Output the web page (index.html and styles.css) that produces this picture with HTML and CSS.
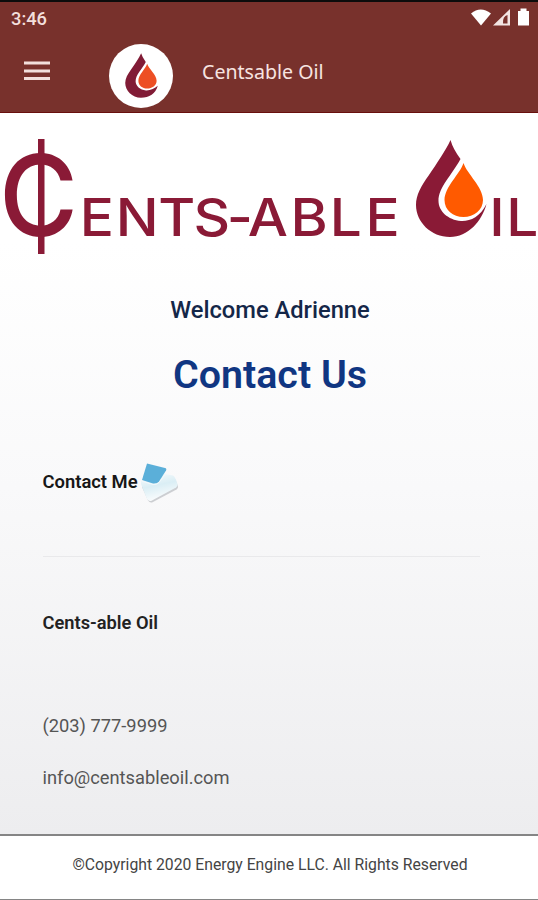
FILE: index.html
```html
<!DOCTYPE html>
<html lang="en">
<head>
<meta charset="utf-8">
<title>Centsable Oil</title>
<link rel="stylesheet" href="styles.css">
</head>
<body>
<div class="app">
  <header class="header">
    <div class="status">
      <span class="time">3:46</span>
      <svg class="status-icons" width="60" height="20" viewBox="0 0 60 20" fill="#fff">
        <path d="M1 5.500Q10.500-2.500 21 5.500L11 17.500Z"/>
        <path d="M23 17.500L40 1V17.500ZM33 15.500H37.500V7Q32.500 8 33 15.500Z" fill-rule="evenodd" fill="#f2e4e2"/>
        <path d="M48 3H50.500V.5H56.500V3H59V17.500H48Z"/>
      </svg>
    </div>
    <div class="toolbar">
      <svg class="menu" width="26" height="20" viewBox="0 0 26 20" fill="#f3dfdc"><path d="M0 .5h26v3H0zM0 8.500h26v3H0zM0 16h26v3H0z"/></svg>
      <div class="avatar">
        <svg width="33" height="45" viewBox="415.500 26.500 71.500 98" preserveAspectRatio="none">
          <path fill="#811c36" d="M450.500 27C446 37 437 50 429 62C421 73 416 82 416 92C416 109 431 124 450 124C468 124 482 115 486.500 98C480 104 470 108.500 461 108C448 107 438.500 98 438.500 88C438.500 74 452 62 460.500 46Q453 36 450.500 27Z"/>
          <path fill="#ed4f24" d="M463.500 50C460 61 444.500 74 444.500 87C444.500 97 453 104 463.500 104C474 104 484 97 484 87C484 74 467 61 463.500 50Z"/>
        </svg>
      </div>
      <span class="title">Centsable Oil</span>
    </div>
  </header>
  <main class="content">
    <svg class="brand" width="538" height="142" viewBox="0 0 538 142" fill="#8a1a36">
      <text class="brand-c" x="-1" y="123" textLength="79" lengthAdjust="spacingAndGlyphs">C</text>
      <rect x="38" y="26" width="6.500" height="115"/>
      <text class="brand-text" transform="scale(1.080 1)" y="123" x="73.800 107.200 146.500 179.100 210 229.500 269 305.300 338.500">ENTS-ABLE</text>
      <path d="M450.500 27C446 37 437 50 429 62C421 73 416 82 416 92C416 109 431 124 450 124C468 124 482 108 486.500 91C480 104 470 108.500 461 108C448 107 438.500 98 438.500 88C438.500 74 452 62 460.500 46Q453 36 450.500 27Z"/>
      <path fill="#ff5a00" d="M463.500 50C460 61 444.500 74 444.500 87C444.500 97 453 104 463.500 104C474 104 483 97 483 87C483 74 467 61 463.500 50Z"/>
      <text class="brand-text" transform="scale(1.080 1)" y="123" x="453 468.800">IL</text>
    </svg>
    <p class="welcome">Welcome Adrienne</p>
    <h1 class="heading">Contact Us</h1>
    <section class="details">
      <div class="contact">
        <span>Contact Me</span>
        <svg width="40" height="42" viewBox="0 0 40 42">
          <defs><linearGradient id="paper" x1="0" y1="0" x2="0.300" y2="1"><stop offset="0" stop-color="#fafcfd"/><stop offset=".5" stop-color="#daeef5"/><stop offset="1" stop-color="#fafcfd"/></linearGradient></defs>
          <path d="M3 22L36 17L39 24Q39.500 26 37.500 27.500L14 40Q11 41.500 9 38.500L3 25Z" fill="#a8acb0" opacity=".55"/>
          <path d="M2 19L26 12L34 13.500Q36 14 38.500 22Q39 24 37 25.500L13 38.500Q10 40 8 37L2 22Z" fill="url(#paper)"/>
          <path d="M8 1.500L26 6Q28 6.500 27 8.500L20 19.500Q18 22 14 21.500L3 18Z" fill="#5bafd9"/>
          <path d="M2.500 19L14 22.500Q18 23 20 20.500L26.500 12" fill="none" stroke="#f2f9fc"/>
        </svg>
      </div>
      <hr class="rule">
      <p class="company">Cents-able Oil</p>
      <p class="phone">(203) 777-9999</p>
      <p class="email">info@centsableoil.com</p>
    </section>
  </main>
  <footer class="footer">©Copyright 2020 Energy Engine LLC. All Rights Reserved</footer>
</div>
</body>
</html>
```
FILE: styles.css
```css
* { box-sizing: border-box; }
body, p, h1 { margin: 0; }
body { font-family: Roboto, "Liberation Sans", sans-serif; background: #fff; }
.app { height: 900px; display: flex; flex-direction: column; overflow: hidden; }
.header { height: 113px; background: #78312c; border-top: 2px solid #0c0c0c; border-bottom: 1px solid #680f0d; }
.status { height: 34px; padding: 0 8px 0 11px; display: flex; align-items: center; justify-content: space-between; }
.time { font-size: 18.3px; line-height: 34px; font-weight: 500; color: #f3dfdc; }
.status-icons { margin-top: -2px; }
.toolbar { display: flex; align-items: center; height: 76px; padding: 0 24px 6px; }
.menu { flex: none; }
.avatar { width: 64px; height: 64px; margin: 9px 0 0 59px; border-radius: 50%; background: #fff; display: flex; align-items: center; justify-content: center; flex: none; }
.title { margin: 1px 0 0 29px; font-family: "Noto Sans", sans-serif; font-size: 19.6px; line-height: 28px; color: #f7e4e1; white-space: nowrap; }
.content { height: 721px; background: linear-gradient(#fff 0%, #fff 18%, #f9f9fa 52%, #ededef 100%); }
.brand { display: block; height: 142px; overflow: visible; }
.brand-c { font: 500 112px Inter, sans-serif; }
.brand-text { font: 500 52.5px Inter, sans-serif; }
.welcome { margin-top: 40px; text-align: center; font-size: 23.7px; line-height: 30px; font-weight: 500; color: #142748; white-space: nowrap; padding-left: 2px; }
.heading { margin-top: 25px; text-align: center; font-size: 39.4px; line-height: 50px; font-weight: 600; color: #103682; white-space: nowrap; padding-left: 2px; }
.details { padding: 62px 58px 0 42.5px; font-size: 18.3px; color: #555; }
.contact { display: flex; align-items: center; height: 40px; gap: 1px; font-size: 18.4px; font-weight: 600; color: #171717; }
.contact span { margin-top: -2px; }
.contact svg { margin-top: 2px; }
.rule { height: 1px; border: 0; margin: 54px 0 53px; background: #e9e9eb; }
.company { line-height: 26px; font-weight: 600; color: #222; }
.phone { margin-top: 77px; line-height: 26px; }
.email { margin-top: 26px; line-height: 26px; }
.footer { flex: 1; border-top: 2px solid #858585; border-bottom: 1px solid #858585; text-align: center; font-size: 15.75px; line-height: 58px; color: #444; background: #fff; padding-left: 2px; }
```
